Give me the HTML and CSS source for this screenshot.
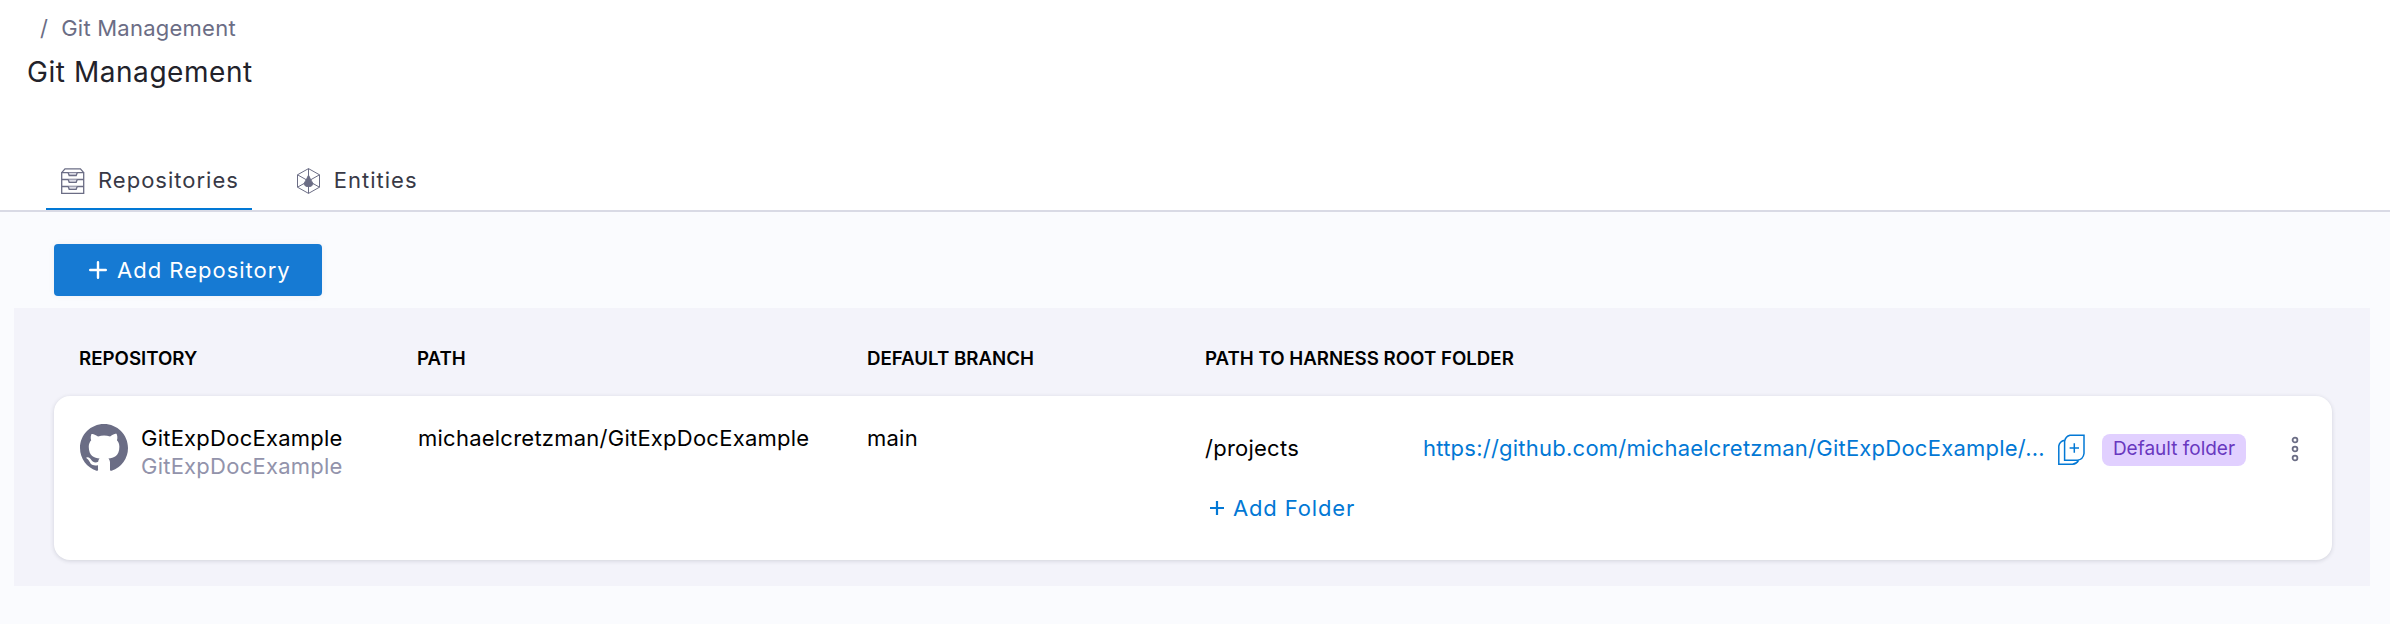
FILE: index.html
```
<!DOCTYPE html>
<html lang="en">
<head>
    <meta charset="UTF-8">
    <meta name="viewport" content="width=device-width, initial-scale=1.0">
    <title>Git Management</title>
    <link rel="stylesheet" href="styles.css">
</head>
<body>

    <header class="header">
        <div class="breadcrumb"><span class="slash">/</span><span>Git Management</span></div>
        <h1>Git Management</h1>
    </header>

    <nav class="tabs">
        <a class="tab active">
            <svg width="24" height="26" viewBox="0 0 24 26" fill="none" stroke="#6b6d85" stroke-width="1.3">
                <path d="M0.7 4.7h22v20.6h-22zM0.7 4.7L4 0.8h15.4l3.3 3.9M0.7 11.5h22M0.7 18.5h22"/>
                <path d="M7.2 4.7l1 2.8h7l1-2.8M7.2 11.5l1 2.8h7l1-2.8M7.2 18.5l1 2.8h7l1-2.8" fill="#dcdce6"/>
            </svg>
            <span>Repositories</span>
        </a>
        <a class="tab">
            <svg width="24" height="26" viewBox="0 0 24 26" fill="none" stroke="#6b6d85" stroke-width="1">
                <path d="M11.5 0.6L22.5 6.8v12.4l-11 6.2-11-6.2V6.8zM0.5 6.8l22 12.4M22.5 6.8L0.5 19.2M11.5 0.6v24.8"/>
                <path d="M11.5 7.2c1.6 2.6 2 5 3.6 6.8 1.6 2.1.4 4.6-3.6 4.6s-5.2-2.5-3.6-4.6c1.6-1.8 2-4.2 3.6-6.8z" fill="#6b6d85"/>
            </svg>
            <span>Entities</span>
        </a>
    </nav>

    <main>
        <button class="add-repo">
            <svg width="18" height="18" viewBox="0 0 18 18" stroke="#fff" stroke-width="2.4" stroke-linecap="round"><path d="M9 1.2v15.6M1.2 9h15.6"/></svg>
            <span>Add Repository</span>
        </button>

        <section class="panel">
            <div class="row head">
                <div>REPOSITORY</div>
                <div>PATH</div>
                <div>DEFAULT BRANCH</div>
                <div>PATH TO HARNESS ROOT FOLDER</div>
            </div>
            <div class="row card">
                <div class="repo">
                    <svg width="48" height="48" viewBox="0 0 16 16" fill="#6b6d85"><path d="M8 0C3.58 0 0 3.58 0 8c0 3.54 2.29 6.53 5.47 7.59.4.07.55-.17.55-.38 0-.19-.01-.82-.01-1.49-2.01.37-2.53-.49-2.69-.94-.09-.23-.48-.94-.82-1.13-.28-.15-.68-.52-.01-.53.63-.01 1.08.58 1.23.82.72 1.21 1.87.87 2.33.66.07-.52.28-.87.51-1.07-1.78-.2-3.64-.89-3.64-3.95 0-.87.31-1.59.82-2.15-.08-.2-.36-1.02.08-2.12 0 0 .67-.21 2.2.82.64-.18 1.32-.27 2-.27s1.36.09 2 .27c1.53-1.04 2.2-.82 2.2-.82.44 1.1.16 1.92.08 2.12.51.56.82 1.27.82 2.15 0 3.07-1.87 3.75-3.65 3.95.29.25.54.73.54 1.48 0 1.07-.01 1.93-.01 2.2 0 .21.15.46.55.38A8.01 8.01 0 0 0 16 8c0-4.42-3.58-8-8-8z"/></svg>
                    <div class="repo-name">
                        <div>GitExpDocExample</div>
                        <div class="sub">GitExpDocExample</div>
                    </div>
                </div>
                <div class="path">michaelcretzman/GitExpDocExample</div>
                <div>main</div>
                <div class="folders">
                    <div class="folder">
                        <span class="folder-name">/projects</span>
                        <a class="url">https://github.com/michaelcretzman/GitExpDocExample/...</a>
                        <svg class="copy" width="28" height="32" viewBox="0 0 28 32" fill="none" stroke="#0278d5" stroke-width="1.5">
                            <path d="M12 1.3h14v18.2q-.8 5.800-6.500 6.800H6.600V7.300Q7.600 2.300 12 1.300z"/>
                            <path d="M6.600 6.300Q1.600 7.300.8 12v18.300h13.700q4.300-.6 6-4M16.300 9.300v9.400M11.600 14H21"/>
                        </svg>
                        <span class="tag">Default folder</span>
                        <svg class="more" width="8" height="26" viewBox="0 0 8 26" fill="none" stroke="#6b6d85" stroke-width="1.8">
                            <circle cx="4" cy="4" r="2.4"/><circle cx="4" cy="13" r="2.4"/><circle cx="4" cy="22" r="2.4"/>
                        </svg>
                    </div>
                    <a class="add-folder">
                        <svg width="14" height="14" viewBox="0 0 14 14" stroke="#0278d5" stroke-width="2.2"><path d="M7 0v14M0 7h14"/></svg>
                        <span>Add Folder</span>
                    </a>
                </div>
            </div>
        </section>
    </main>

</body>
</html>
```
FILE: styles.css
```
* {
    box-sizing: border-box;
}

body {
    margin: 0;
    font-family: Inter, "Liberation Sans", sans-serif;
    font-size: 22px;
    line-height: 28px;
    letter-spacing: 0.24px;
    color: #000;
    background-color: #fafbfe;
}

svg {
    flex: none;
    display: block;
}

.header {
    height: 150px;
    padding: 14px 27px;
    background-color: #fff;
}

.breadcrumb {
    display: flex;
    gap: 13px;
    padding-left: 13px;
    color: #6b6d85;
}

h1 {
    margin: 11px 0 0;
    font-size: 28px;
    line-height: 38px;
    font-weight: 400;
    letter-spacing: 0.55px;
    color: #22222a;
}

.tabs {
    display: flex;
    gap: 30px;
    height: 62px;
    padding-left: 46px;
    background-color: #fff;
    border-bottom: 2px solid #d9dae5;
}

.tab {
    display: flex;
    align-items: center;
    gap: 13px;
    padding: 2px 13px 0 15px;
    color: #383946;
    letter-spacing: 1px;
    border-bottom: 2px solid transparent;
}

.tab svg {
    margin-top: 2px;
}

.tab.active {
    border-color: #0278d5;
}

.add-repo {
    display: flex;
    align-items: center;
    gap: 10px;
    width: 268px;
    height: 52px;
    margin: 32px 0 12px 54px;
    padding: 0 0 0 35px;
    border: none;
    border-radius: 4px;
    background-color: #167ad3;
    box-shadow: 0 0 6px rgba(40, 41, 61, 0.06);
    color: #fff;
    font-family: inherit;
    font-size: 22px;
    letter-spacing: 1px;
}

.panel {
    height: 278px;
    margin: 0 20px 0 14px;
    padding: 0 38px 0 40px;
    background-color: #f3f3fa;
}

.row {
    display: grid;
    grid-template-columns: 338px 450px 338px 1fr;
    padding-left: 25px;
}

.head {
    height: 88px;
    padding-top: 37px;
    font-size: 18.7px;
    font-weight: 600;
    letter-spacing: 0;
}

.card {
    height: 164px;
    padding-top: 28px;
    border-radius: 16px;
    background-color: #fff;
    box-shadow: 0 1px 4px rgba(40, 41, 61, 0.16);
}

.repo {
    display: flex;
    gap: 13px;
    padding-left: 1px;
}

.path {
    padding-left: 1px;
}

.sub {
    color: #9293ab;
}

.folders {
    padding-top: 10px;
}

.folder {
    display: flex;
    align-items: center;
    height: 28px;
}

.folder-name {
    width: 218px;
}

.url {
    width: 635px;
    color: #0278d5;
    white-space: nowrap;
}

.copy {
    margin-top: 4px;
}

.tag {
    width: 144px;
    height: 32px;
    margin: 4px 0 0 16px;
    border-radius: 8px;
    background-color: #e1d0ff;
    color: #6938c0;
    font-size: 19px;
    line-height: 30px;
    letter-spacing: 0;
    text-align: center;
}

.more {
    margin: 2px 0 0 45px;
}

.add-folder {
    display: flex;
    align-items: center;
    gap: 9px;
    margin-top: 32px;
    padding-left: 5px;
    color: #0278d5;
    letter-spacing: 0.85px;
}
```
